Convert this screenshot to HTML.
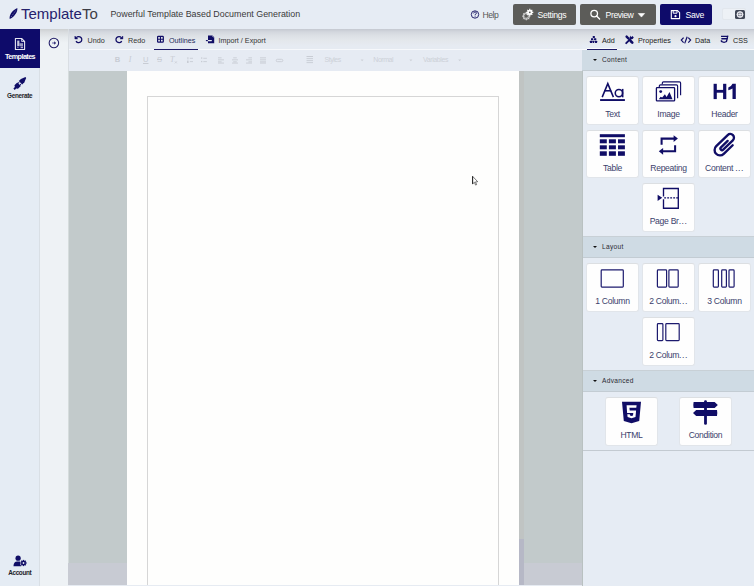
<!DOCTYPE html>
<html><head><meta charset="utf-8">
<style>
*{box-sizing:border-box;margin:0;padding:0}
html,body{width:754px;height:586px;overflow:hidden;background:#e6ecf4;font-family:"Liberation Sans",sans-serif}
.abs{position:absolute}
#header{left:0;top:0;width:754px;height:29px;background:#e6ecf4;z-index:5}
#shadow{left:40px;top:29px;width:714px;height:7px;background:linear-gradient(rgba(60,70,80,0.14),rgba(60,70,80,0));z-index:6}
#vline{left:68px;top:29px;width:1px;height:42px;background:#d9dee3}
#sidebar{left:0;top:29px;width:40px;height:557px;background:#e5ecf4;border-right:1px solid #d9dfe5}
#col2{left:40px;top:29px;width:28px;height:557px;background:linear-gradient(#cdd0d2 0,#d9dcdf 3px,#e5e9ec 8px,#eef2f5 14px)}
#tb1{left:68px;top:29px;width:514px;height:20px;background:linear-gradient(#c5c9d1 0,#d3d7de 3px,#dde1e6 7px,#e3e7eb 11px,#e6ebf2 17px)}
#tbline{left:68px;top:49px;width:514px;height:1px;background:#f6f8fb}
#tb2{left:68px;top:50px;width:514px;height:21px;background:#e6ebf3}
#editor{left:68px;top:71px;width:515px;height:515px;background:#c2cacb;border-left:1px solid #d5dcdc;border-right:1px solid #b9c1c1}
#page{left:127px;top:71px;width:392px;height:515px;background:#fefefd}
#inner{left:147px;top:96px;width:352px;height:500px;border:1px solid #d6d6d6}
#rpanel{left:582px;top:29px;width:172px;height:557px;background:linear-gradient(#c5c9d1 0,#d3d7de 3px,#dde1e6 7px,#e3e7eb 11px,#e6ecf4 17px)}
.txt{position:absolute;white-space:nowrap;line-height:1}
.navy{color:#0e0b6a}
.btn{position:absolute;height:21px;border-radius:2px}
.card{position:absolute;width:53px;height:48.6px;background:#fefefe;border:1px solid #e1e5ea;border-top-color:#dcdfe2;border-radius:3px}
.card .lbl{position:absolute;left:-2px;right:-2px;top:33px;text-align:center;font-size:8.6px;letter-spacing:-0.3px;color:#3b3e6c;line-height:1;white-space:nowrap}
.sec{position:absolute;left:582px;width:172px;height:21px;background:#cfdbe4;border-bottom:1px solid #c3ccd3}
.sec.b{border-top:1px solid #c8d0d6;height:22px}
.sec .t{position:absolute;left:20px;top:6.6px;font-size:6.6px;color:#2a2a33;letter-spacing:0.3px;line-height:1}
.sec .tri{position:absolute;left:10.5px;top:8.8px;width:0;height:0;border-left:2.3px solid transparent;border-right:2.3px solid transparent;border-top:2.4px solid #111}
</style></head><body>

<div id="header" class="abs">
  <div class="txt" style="left:21px;top:6px;font-size:15px;color:#25216c">Template<span style="color:#3d3d45">To</span></div>
  <div class="txt" style="left:110.4px;top:9.7px;font-size:8.9px;color:#3a3a3a">Powerful Template Based Document Generation</div>
  <div class="txt" style="left:482.6px;top:10.6px;font-size:8.6px;letter-spacing:-0.5px;color:#555">Help</div>
  <div class="btn" style="left:513px;top:4px;width:63px;background:#5c5c59"></div>
  <div class="txt" style="left:537.6px;top:11px;font-size:8.7px;letter-spacing:-0.35px;color:#fff">Settings</div>
  <div class="btn" style="left:580px;top:4px;width:76px;background:#5c5c59"></div>
  <div class="txt" style="left:605.6px;top:11px;font-size:8.7px;letter-spacing:-0.45px;color:#fff">Preview</div>
  <div class="btn" style="left:660px;top:4px;width:52px;background:#0e0b6a"></div>
  <div class="txt" style="left:685.5px;top:11px;font-size:8.7px;letter-spacing:-0.35px;color:#fff">Save</div>
  <div class="abs" style="left:721.5px;top:8.3px;width:24.5px;height:12px;background:#edf1f6;border:1px solid #e2e7ed;border-radius:2px"></div>
  <div class="abs" style="left:735px;top:9.6px;width:10px;height:9.5px;background:#404756;border-radius:1.5px"></div>
</div>

<div id="sidebar" class="abs">
  <div class="abs" style="left:0;top:0;width:40px;height:39px;background:#0e0b6a"></div>
  <div class="txt" style="left:5px;top:24px;font-size:7.2px;font-weight:bold;color:#fff;letter-spacing:-0.55px">Templates</div>
  <div class="txt" style="left:7px;top:64.2px;font-size:6.4px;letter-spacing:-0.3px;font-weight:bold;color:#1e1e28">Generate</div>
  <div class="txt" style="left:8.2px;top:541.4px;font-size:6.4px;letter-spacing:-0.35px;font-weight:bold;color:#1e1e28">Account</div>
</div>
<div id="col2" class="abs"></div>


<div id="tb1" class="abs"></div>
<div id="tbline" class="abs"></div>
<div class="abs" style="left:582px;top:71px;width:1px;height:515px;background:#b9c1c1;z-index:2"></div>
<div id="tb2" class="abs"></div>
<div id="vline" class="abs"></div>
<div class="txt" style="left:87.5px;top:37px;font-size:7.2px;color:#333">Undo</div>
<div class="txt" style="left:128px;top:37px;font-size:7.2px;color:#333">Redo</div>
<div class="txt" style="left:169px;top:37px;font-size:7.2px;color:#222a5a">Outlines</div>
<div class="abs" style="left:154px;top:48.5px;width:44px;height:1.5px;background:#1e1a66"></div>
<div class="txt" style="left:218.5px;top:37px;font-size:7.2px;color:#333">Import / Export</div>


<div class="abs" style="left:0;top:0;z-index:9">
 <div class="txt" style="left:114.8px;top:56.3px;font-family:'Liberation Sans';font-weight:bold;font-size:7.6px;color:#c8ccd4">B</div>
 <div class="txt" style="left:128.8px;top:56.3px;font-family:'Liberation Serif';font-style:italic;font-size:8px;color:#c8ccd4">I</div>
 <div class="txt" style="left:143px;top:56.3px;font-family:'Liberation Sans';font-size:7.6px;color:#c8ccd4;text-decoration:underline">U</div>
 <div class="txt" style="left:157px;top:56.3px;font-family:'Liberation Sans';font-size:7.6px;color:#c8ccd4;text-decoration:line-through">S</div>
 <div class="txt" style="left:170px;top:56.3px;font-family:'Liberation Serif';font-style:italic;font-size:8px;color:#c8ccd4">T</div>
 <div class="txt" style="left:324.5px;top:56.3px;font-size:7px;letter-spacing:-0.45px;color:#cdd1d8">Styles</div>
 <div class="txt" style="left:373.3px;top:56.3px;font-size:7px;letter-spacing:-0.45px;color:#cdd1d8">Normal</div>
 <div class="txt" style="left:423px;top:56.3px;font-size:7px;letter-spacing:-0.4px;color:#cdd1d8">Variables</div>
</div>
<svg class="abs" style="left:0;top:0;z-index:9;pointer-events:none" width="754" height="586">
<g fill="#c8ccd4">
 <path d="M174.8,61.3 L176.9,63.4 M176.9,61.3 L174.8,63.4" stroke="#c8ccd4" stroke-width="0.7"/>
 <!-- ol -->
 <rect x="187.4" y="57.2" width="1" height="2.2"/><rect x="187" y="60.6" width="1.6" height="2.4"/>
 <rect x="189.8" y="57.8" width="3.2" height="0.9"/><rect x="189.8" y="61.2" width="3.2" height="0.9"/>
 <!-- ul -->
 <rect x="201" y="57.4" width="1.3" height="1.3"/><rect x="201" y="60.9" width="1.3" height="1.3"/>
 <rect x="203.3" y="57.8" width="3.6" height="0.9"/><rect x="203.3" y="61.2" width="3.6" height="0.9"/>
 <!-- aligns -->
 <rect x="218" y="57.4" width="3.6" height="0.9"/><rect x="218" y="59.4" width="6" height="0.9"/><rect x="218" y="61.4" width="3.6" height="0.9"/><rect x="218" y="62.6" width="6" height="0.9"/>
 <rect x="233.2" y="57.4" width="3.6" height="0.9"/><rect x="232" y="59.4" width="6" height="0.9"/><rect x="233.2" y="61.4" width="3.6" height="0.9"/><rect x="232" y="62.6" width="6" height="0.9"/>
 <rect x="248.4" y="57.4" width="3.6" height="0.9"/><rect x="246" y="59.4" width="6" height="0.9"/><rect x="248.4" y="61.4" width="3.6" height="0.9"/><rect x="246" y="62.6" width="6" height="0.9"/>
 <rect x="260" y="57.4" width="6" height="0.9"/><rect x="260" y="59.4" width="6" height="0.9"/><rect x="260" y="61.4" width="6" height="0.9"/><rect x="260" y="62.6" width="6" height="0.9"/>
 <!-- link -->
 <rect x="276.2" y="59.3" width="6.6" height="2.4" rx="1.2" fill="none" stroke="#c8ccd4" stroke-width="0.9"/>
 <!-- table -->
 <rect x="306.5" y="56" width="6.5" height="1"/><rect x="306.5" y="58.2" width="6.5" height="0.9"/><rect x="306.5" y="60.2" width="6.5" height="0.9"/><rect x="306.5" y="62.2" width="6.5" height="0.9"/>
 <!-- carets -->
 <path d="M360.6,59.6 H363.6 L362.1,61.2 Z M409.4,59.6 H412.4 L410.9,61.2 Z M458.2,59.6 H461.2 L459.7,61.2 Z" fill="#cdd1d8"/>
</g>
</svg>
<div id="editor" class="abs"></div>
<div id="page" class="abs"></div>
<div id="inner" class="abs"></div>
<div class="abs" style="left:519px;top:71px;width:5px;height:468px;background:#c0c4c3"></div>
<div class="abs" style="left:519px;top:539px;width:5px;height:46px;background:#b6b8c6"></div>
<div class="abs" style="left:68px;top:563px;width:59px;height:22px;background:#c8cbd3"></div>
<div class="abs" style="left:524px;top:563px;width:58px;height:22px;background:#c8cbd3"></div>
<div class="abs" style="left:68px;top:585px;width:515px;height:1px;background:#e6ebf2"></div>


<div id="rpanel" class="abs"></div>
<div class="txt" style="left:602px;top:37px;font-size:7.2px;color:#222">Add</div>
<div class="abs" style="left:582px;top:49px;width:172px;height:1px;background:#f9fafc"></div>
<div class="abs" style="left:587px;top:48px;width:30px;height:1px;background:#f9fafc"></div>
<div class="abs" style="left:587px;top:49px;width:30px;height:1px;background:#1e1a66"></div>
<div class="txt" style="left:638px;top:37px;font-size:7.2px;color:#222">Properties</div>
<div class="txt" style="left:695px;top:37px;font-size:7.2px;color:#222">Data</div>
<div class="txt" style="left:733px;top:37px;font-size:7.2px;color:#222">CSS</div>

<div class="sec" style="top:50px"><div class="tri"></div><div class="t">Content</div></div>
<div class="card" style="left:586px;top:76px"><div class="lbl">Text</div></div>
<div class="card" style="left:642px;top:76px"><div class="lbl">Image</div></div>
<div class="card" style="left:698px;top:76px"><div class="lbl">Header</div></div>
<div class="card" style="left:586px;top:129.5px"><div class="lbl">Table</div></div>
<div class="card" style="left:642px;top:129.5px"><div class="lbl">Repeating</div></div>
<div class="card" style="left:698px;top:129.5px"><div class="lbl">Content <span style="letter-spacing:0.5px">...</span></div></div>
<div class="card" style="left:642px;top:183px"><div class="lbl">Page Br<span style="letter-spacing:0.5px">...</span></div></div>

<div class="sec b" style="top:236px"><div class="tri"></div><div class="t">Layout</div></div>
<div class="card" style="left:586px;top:263px"><div class="lbl">1 Column</div></div>
<div class="card" style="left:642px;top:263px"><div class="lbl">2 Colum<span style="letter-spacing:0.5px">...</span></div></div>
<div class="card" style="left:698px;top:263px"><div class="lbl">3 Column</div></div>
<div class="card" style="left:642px;top:317px"><div class="lbl">2 Colum<span style="letter-spacing:0.5px">...</span></div></div>

<div class="sec b" style="top:370px"><div class="tri"></div><div class="t">Advanced</div></div>
<div class="card" style="left:605px;top:397px"><div class="lbl">HTML</div></div>
<div class="card" style="left:679px;top:397px"><div class="lbl">Condition</div></div>
<div class="abs" style="left:582px;top:450px;width:172px;height:1px;background:#c3cad1"></div>


<svg class="abs" style="left:0;top:0;z-index:10;pointer-events:none" width="754" height="586" viewBox="0 0 754 586">
<g fill="#100d66">
 <!-- feather -->
 <path d="M9.7,19 C9.1,16 11,11 17.3,8 C17.7,11.8 15.2,16.2 9.7,19 Z"/>
</g>
<path d="M11,17 L16,10.2" stroke="#e6ecf4" stroke-width="0.6" stroke-dasharray="1 1.3" fill="none" opacity="0.8"/>
<!-- help -->
<circle cx="475" cy="14.5" r="3.7" fill="none" stroke="#1e1a66" stroke-width="0.95"/>
<path d="M473.6,13.4 Q473.8,11.9 475.1,11.9 Q476.5,12 476.4,13.3 Q476.2,14.2 475.1,14.6 L475.1,15.4" fill="none" stroke="#1e1a66" stroke-width="0.9"/>
<circle cx="475.1" cy="16.8" r="0.55" fill="#1e1a66"/>
<!-- settings gears -->
<g fill="none" stroke="#dcdcdc" stroke-width="1.2" opacity="0.75">
 <circle cx="526.3" cy="16.2" r="3"/>
</g>
<g stroke="#e0e0e0" stroke-width="1" opacity="0.75">
 <path d="M526.3,12 V20.4 M522.1,16.2 H530.5 M523.3,13.2 L529.3,19.2 M529.3,13.2 L523.3,19.2"/>
</g>
<circle cx="526.3" cy="16.2" r="1.4" fill="#5c5c59"/>
<g fill="#ffffff">
 <circle cx="529.8" cy="12.3" r="2.6"/>
 <path d="M529.8,8.8 V15.8 M526.3,12.3 H533.3 M527.3,9.8 L532.3,14.8 M532.3,9.8 L527.3,14.8" stroke="#ffffff" stroke-width="1.2"/>
</g>
<circle cx="529.8" cy="12.3" r="0.9" fill="#5c5c59"/>
<!-- search -->
<circle cx="594.2" cy="13.6" r="3.3" fill="none" stroke="#ffffff" stroke-width="1.3"/>
<path d="M596.6,16.1 L599.6,19" stroke="#ffffff" stroke-width="1.4" stroke-linecap="round"/>
<!-- caret -->
<path d="M638.3,13.5 L644.6,13.5 L641.45,17.1 Z" fill="#fff" stroke="#fff" stroke-width="0.6" stroke-linejoin="round"/>
<!-- floppy -->
<path d="M671.3,10.6 H677.6 L679.6,12.6 V18.6 H671.3 Z" fill="none" stroke="#fff" stroke-width="1.1" stroke-linejoin="round"/>
<path d="M673.2,10.6 V13.2 H677 V10.6" fill="none" stroke="#fff" stroke-width="1"/>
<circle cx="675.5" cy="16.2" r="1.1" fill="#fff"/>
<!-- toggle gear -->
<circle cx="740" cy="14.4" r="2.6" fill="none" stroke="#e8e8ee" stroke-width="1.3"/>
<circle cx="740" cy="14.4" r="1" fill="#e8e8ee"/>
<path d="M740,11 V17.8 M736.6,14.4 H743.4" stroke="#e8e8ee" stroke-width="0.8"/>

<!-- templates file icon -->
<path d="M15.4,38.5 H21.6 L24.6,41.5 V49.5 H15.4 Z" fill="none" stroke="#e6e6f2" stroke-width="1.1" stroke-linejoin="round"/>
<path d="M21.6,38.5 V41.5 H24.6" fill="none" stroke="#e6e6f2" stroke-width="0.8"/>
<rect x="17.2" y="40.6" width="2.2" height="5.5" fill="#c8c8dc"/>
<rect x="19.4" y="43.2" width="3.6" height="3" fill="#9a9ac0"/>
<rect x="17.2" y="46.6" width="1.4" height="1.4" fill="#8888b0"/>
<rect x="20.6" y="46.6" width="2.4" height="1.6" fill="#b0b0d0"/>
<!-- generate plug -->
<g transform="translate(19.9,83.4) rotate(-45) scale(0.93)" fill="#100d66">
 <path d="M-8.9,-1 L-6.6,-1 L-5.6,-2.7 L-1.3,-2.7 L-1.3,2.7 L-5.6,2.7 L-6.6,1 L-8.9,1 Z"/>
 <rect x="-1.4" y="-1.9" width="1.6" height="1.1"/>
 <rect x="-1.4" y="0.8" width="1.6" height="1.1"/>
 <path d="M0.9,-2.6 L4.2,-2.6 L9,-0.6 L9,0.6 L4.2,2.6 L0.9,2.6 Z"/>
</g>
<!-- collapse circle arrow -->
<circle cx="53.9" cy="43.05" r="4.75" fill="none" stroke="#1e1a66" stroke-width="1.05"/>
<path d="M52.1,43 H54.6" stroke="#5a57a0" stroke-width="1"/>
<path d="M54.2,41.3 L56.1,43 L54.2,44.7 Z" fill="#1e1a66"/>
<!-- account -->
<g fill="#100d66">
 <circle cx="18.1" cy="558.2" r="2.6"/>
 <path d="M13.5,566.3 Q13.5,561.6 17.2,561.6 H19.4 Q21.2,561.6 22,562.4 L21.2,566.3 Z"/>
</g>
<g transform="translate(23.5,563)">
 <circle r="3.4" fill="#e5ecf4"/>
 <g fill="#100d66">
  <circle r="2.2"/>
  <rect x="-0.75" y="-3.1" width="1.5" height="6.2"/>
  <rect x="-3.1" y="-0.75" width="6.2" height="1.5"/>
  <rect x="-0.75" y="-3.1" width="1.5" height="6.2" transform="rotate(45)"/>
  <rect x="-0.75" y="-3.1" width="1.5" height="6.2" transform="rotate(-45)"/>
 </g>
 <circle r="0.9" fill="#e5ecf4"/>
</g>
<!-- toolbar undo/redo -->
<g fill="none" stroke="#100d66" stroke-width="1.25">
 <path d="M76.33,37.6 A3.1,3.1 0 1 1 76.0,41.15"/>
 <path d="M121.42,37.6 A3.1,3.1 0 1 0 121.75,41.15"/>
</g>
<path d="M74.9,36.1 L74.9,38.9 L77.7,38.9 Z" fill="#100d66" stroke="#100d66" stroke-width="0.5" stroke-linejoin="round"/>
<path d="M122.85,36.1 L122.85,38.9 L120.05,38.9 Z" fill="#100d66" stroke="#100d66" stroke-width="0.5" stroke-linejoin="round"/>
<!-- outlines -->
<rect x="157.6" y="36.4" width="5.7" height="5.7" fill="none" stroke="#100d66" stroke-width="1.2" rx="0.6"/>
<path d="M157.6,39.25 H163.3 M160.45,36.4 V42.1" stroke="#100d66" stroke-width="1.1"/>
<!-- import -->
<path d="M208,35.5 H212.4 L214.2,37.3 V43.3 H208 Z" fill="#100d66"/>
<path d="M212.2,36.2 L213.5,37.5" stroke="#dfe3ea" stroke-width="0.55"/>
<path d="M205.9,40.6 H208.2" stroke="#100d66" stroke-width="1.1"/>
<path d="M208.3,40.6 H211.4" stroke="#e8ecf2" stroke-width="1.1" stroke-linecap="round"/>
<!-- tab icons -->
<g fill="#100d66">
 <rect x="592.7" y="35.9" width="2.2" height="2" rx="0.4"/>
 <rect x="591" y="38.2" width="2.3" height="2" rx="0.4"/>
 <rect x="594" y="38.2" width="2.3" height="2" rx="0.4"/>
 <rect x="589.9" y="40.8" width="2.3" height="2.2" rx="0.4"/>
 <rect x="592.6" y="40.8" width="1.6" height="2.2" rx="0.4"/>
 <rect x="594.9" y="40.8" width="2.2" height="2.2" rx="0.4"/>
</g>
<g stroke="#100d66" stroke-linecap="round" fill="#100d66">
 <path d="M626.6,36.6 L632.2,42.6" stroke-width="1.1"/>
 <path d="M626.6,36.6 L628.4,38.5" stroke-width="2.4"/>
 <path d="M630.6,41 L632.3,42.7" stroke-width="2.6"/>
 <path d="M626.2,43.2 L631,38.4" stroke-width="1.9"/>
 <circle cx="631.6" cy="37.3" r="1.9" stroke="none"/>
</g>
<path d="M632.4,36.5 L634,34.9 L634,36.6 Z" fill="#e6ebf3"/>
<rect x="630.9" y="34.6" width="1.5" height="2.2" fill="#e6ebf3" transform="rotate(45 631.6 35.7)"/>
<g fill="none" stroke="#100d66" stroke-width="1.2">
 <path d="M683.6,37.6 L681.3,40.1 L683.6,42.6"/>
 <path d="M688.3,37.6 L690.6,40.1 L688.3,42.6"/>
 <path d="M687.2,36.8 L684.7,43.4"/>
</g>
<g fill="#100d66">
 <path d="M721,35.8 H728.3 L728.1,37.1 H721.1 Z"/>
 <path d="M721.3,38.1 H727.9 L727.7,39.5 H721.4 Z"/>
 <path d="M728.3,35.8 L728.1,37.1 L726.95,42.1 L725.85,41.4 L727.1,35.8 Z"/>
 <path d="M720.6,40.3 H722.1 L722.4,41.3 L724.1,41.8 L725.9,41.3 L726,40.3 H727.3 L726.95,42.1 L724.1,43 L720.9,42.1 Z"/>
</g>


</svg>

<svg class="abs" style="left:0;top:0;z-index:11;pointer-events:none" width="754" height="586" viewBox="0 0 754 586">
<!-- Aa -->
<g fill="none" stroke="#100d66" stroke-width="1.55">
 <path d="M602.2,97.1 L607.8,83.6 L613.4,97.1"/>
 <path d="M604.4,90.8 H611.2"/>
 <circle cx="618.9" cy="93.1" r="3.65"/>
 <path d="M622.7,88.9 V97.3"/>
</g>
<rect x="600.1" y="99.1" width="24.8" height="1.9" fill="#100d66"/>
<!-- images -->
<g fill="none" stroke="#100d66">
 <rect x="656.4" y="87.7" width="18.2" height="13.2" rx="0.7" stroke-width="1.3"/>
 <path d="M659.3,87.2 V86 Q659.3,84.8 660.5,84.8 H676.4 Q677.6,84.8 677.6,86 V98.3" stroke-width="1.15"/>
 <path d="M662.3,84.2 V83 Q662.3,81.8 663.5,81.8 H679.4 Q680.6,81.8 680.6,83 V95.3" stroke-width="1.15"/>
</g>
<circle cx="660.7" cy="91.6" r="1.45" fill="#100d66"/>
<path d="M658.8,99.2 L660.6,96.8 L662.2,97.6 L664.9,94.3 L666.6,96.9 L669.5,91.9 L672.5,99.2 Z" fill="#100d66"/>
<!-- H1 -->
<g fill="#100d66">
 <rect x="713.6" y="83.8" width="3.2" height="15.3"/>
 <rect x="723.1" y="83.8" width="3.2" height="15.3"/>
 <rect x="715" y="89.9" width="9.6" height="2.8"/>
 <path d="M732.5,83.8 H735.8 V99.1 H732.5 V88.6 Q730.5,89.9 728.3,90.2 V87.6 Q731.2,86.9 732.5,83.8 Z"/>
</g>
<!-- table -->
<g fill="#100d66">
 <rect x="599.8" y="134.2" width="25.1" height="3"/>
 <rect x="599.8" y="139.3" width="7" height="4"/>
 <rect x="608.9" y="139.3" width="7" height="4"/>
 <rect x="618" y="139.3" width="6.9" height="4"/>
 <rect x="599.8" y="145.3" width="7" height="4"/>
 <rect x="608.9" y="145.3" width="7" height="4"/>
 <rect x="618" y="145.3" width="6.9" height="4"/>
 <rect x="599.8" y="151.3" width="7" height="4.5"/>
 <rect x="608.9" y="151.3" width="7" height="4.5"/>
 <rect x="618" y="151.3" width="6.9" height="4.5"/>
</g>
<!-- repeat -->
<g fill="none" stroke="#100d66" stroke-width="2.05">
 <path d="M661.6,144.8 V138.6 H674.2"/>
 <path d="M675.1,145.2 V151.3 H662.4"/>
</g>
<path d="M673.6,135.2 L677.9,138.6 L673.6,142 Z" fill="#100d66"/>
<path d="M663.1,147.9 L658.8,151.3 L663.1,154.7 Z" fill="#100d66"/>
<!-- paperclip -->
<g transform="translate(720,150) rotate(-44)" fill="none" stroke="#100d66" stroke-width="2.35" stroke-linecap="round">
 <path d="M12.4,5.4 L0,5.4 A5.4,5.4 0 0 1 0,-5.4 L15.9,-5.4 A3.7,3.7 0 0 1 15.9,2.0 L2.5,2.0 A1.6,1.6 0 0 1 2.5,-1.2 L11.8,-1.2"/>
</g>
<!-- page break -->
<g fill="none" stroke="#100d66" stroke-width="1.35">
 <path d="M663.5,196.4 V188.5 H678.3 V208.2 H663.5 V199.3"/>
</g>
<path d="M664.2,197.85 H678.6" stroke="#100d66" stroke-width="1.2" stroke-dasharray="1.9 1.1"/>
<path d="M657.6,194.7 L662.2,197.85 L657.6,201 Z" fill="#100d66"/>
<!-- layout icons -->
<g fill="none" stroke="#1c1a6e" stroke-width="1.2">
 <rect x="601.2" y="269.9" width="22.1" height="17.2" rx="0.8"/>
 <rect x="657.4" y="269.9" width="9.2" height="17.2" rx="0.8"/>
 <rect x="668.9" y="269.9" width="9.3" height="17.2" rx="0.8"/>
 <rect x="713.3" y="269.9" width="5.1" height="17.2" rx="0.8"/>
 <rect x="721.7" y="269.9" width="4.7" height="17.2" rx="0.8"/>
 <rect x="729" y="269.9" width="5.1" height="17.2" rx="0.8"/>
 <rect x="657.4" y="323.7" width="5.5" height="16.9" rx="0.8"/>
 <rect x="665.8" y="323.7" width="13.4" height="16.9" rx="0.8"/>
</g>
<!-- html5 -->
<path d="M622,401.7 H641 L639.2,420.9 L631.5,423.3 L623.8,420.9 Z" fill="#100d66"/>
<path d="M626.6,405.2 H636.6 L636.3,407.8 H629.4 L629.7,410.4 H636.1 L635.5,417 L631.5,418.3 L627.6,417 L627.3,414.2 H629.8 L630,415.5 L631.5,416 L633,415.5 L633.3,412.9 H627.1 Z" fill="#fff"/>
<!-- signpost -->
<g fill="#100d66">
 <rect x="704.1" y="400.2" width="2.8" height="24.5" rx="1.3"/>
 <path d="M693.6,402.1 H714.6 L717.8,405.1 L714.6,408.1 H693.6 Q693,405.1 693.6,402.1 Z"/>
 <path d="M717,409.9 H696.2 L693,412.9 L696.2,415.9 H717 Q717.6,412.9 717,409.9 Z"/>
</g>
<!-- cursor -->
<path d="M472.6,176.3 L472.6,183.9 L474.4,182.3 L475.6,185.1 L476.6,184.6 L475.5,181.9 L477.7,181.7 Z" fill="#fff" stroke="#222" stroke-width="0.6" stroke-linejoin="round"/><path d="M472.6,176.3 V183.9" stroke="#222" stroke-width="1"/>
</svg>
</body></html>
